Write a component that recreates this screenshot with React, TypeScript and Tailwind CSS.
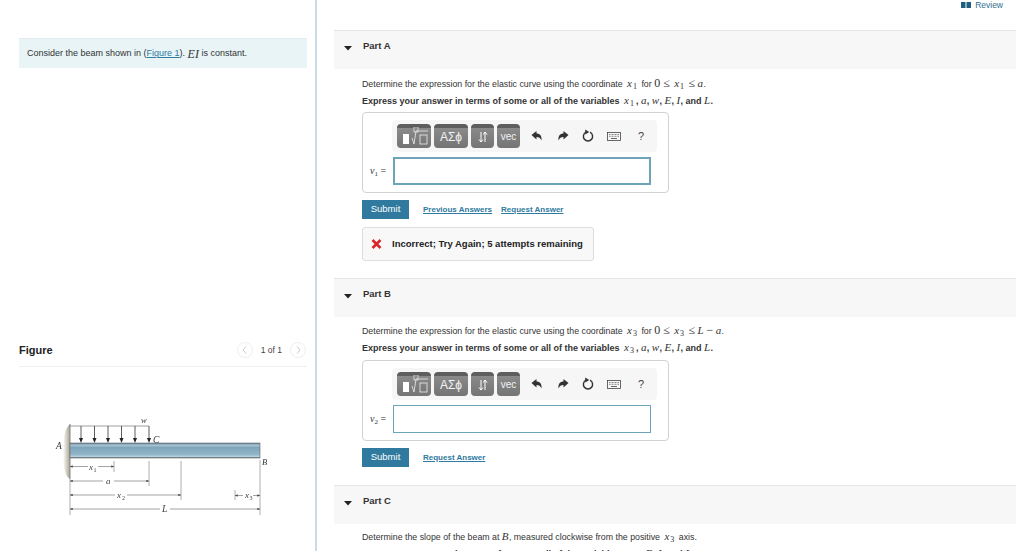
import React from "react";

const sans = { fontFamily: '"Liberation Sans", Arial, sans-serif' };

function M({ children }: { children: React.ReactNode }) {
  return <span className="font-['Liberation_Serif',serif] italic text-[11px] tracking-[0.3px] font-normal">{children}</span>;
}
function Sub({ c, n }: { c: string; n: string }) {
  return (
    <span className="font-['Liberation_Serif',serif] text-[11px] font-normal mx-[2px]">
      <i>{c}</i>
      <sub className="text-[8px] not-italic align-baseline relative top-[2px] ml-[1px]">{n}</sub>
    </span>
  );
}
function N({ children }: { children: React.ReactNode }) {
  return <span className="font-['Liberation_Serif',serif] text-[12px] font-normal">{children}</span>;
}

function PartHeader({ title }: { title: string }) {
  return (
    <div className="flex h-[39px] w-[682px] bg-[#f7f7f7] border-t border-[#e6e6e6] pl-[10px] pt-[8px]">
      <svg width="8" height="14" viewBox="0 0 8 14" className="mt-[1px]">
        <path d="M0 6 H8 L4 10.5 Z" fill="#222" />
      </svg>
      <span className="ml-[11px] text-[9.5px] leading-[14px] font-bold text-[#333]">{title}</span>
    </div>
  );
}

function TBtn({ w, children }: { w: string; children: React.ReactNode }) {
  return (
    <div
      className={`${w} h-[24px] rounded-[4px] border-t-[4px] border-[#5e5e5e] bg-[linear-gradient(#8a8a8a,#747474)] flex items-center justify-center text-white/90 text-[10px] leading-none pb-[3px]`}
    >
      {children}
    </div>
  );
}

function Toolbar() {
  return (
    <div className="ml-[29px] w-[265px] h-[32px] bg-[#f6f6f6] rounded-[4px] flex items-center pl-[5px]">
      <TBtn w="w-[34px]">
        <svg width="30" height="20" viewBox="0 0 30 20">
          <rect x="4" y="7" width="6" height="10" fill="#fff" />
          <path d="M13 11 L15 17 L17 4 H29" stroke="#eee" strokeWidth="0.8" fill="none" />
          <rect x="15" y="0" width="4" height="5" stroke="#eee" strokeWidth="0.7" fill="none" />
          <rect x="21" y="8" width="7" height="9" stroke="#eee" strokeWidth="0.8" fill="none" />
        </svg>
      </TBtn>
      <div className="w-[3px]" />
      <TBtn w="w-[34px]">
        <span className="text-[12px] font-light">ΑΣϕ</span>
      </TBtn>
      <div className="w-[3px]" />
      <TBtn w="w-[23px]">
        <svg width="12" height="12" viewBox="0 0 12 12" fill="none" stroke="#fff" strokeWidth="1">
          <path d="M4 1 V11 M2 8.5 L4 11 L6 8.5" />
          <path d="M8 11 V1 M6.5 3.5 L8 1 L10 3.5" />
        </svg>
      </TBtn>
      <div className="w-[3px]" />
      <TBtn w="w-[23px]">
        <span className="text-[10px]">vec</span>
      </TBtn>
      <svg width="12" height="12" viewBox="0 0 12 12" className="ml-[11px]">
        <path d="M0.5 5 L5.5 1 V3.5 C9 3.5 11 6 10.5 10.5 C9.5 8 8 7 5.5 7 V9.5 Z" fill="#333" />
      </svg>
      <svg width="12" height="12" viewBox="0 0 12 12" className="ml-[14px]">
        <path d="M11.5 5 L6.5 1 V3.5 C3 3.5 1 6 1.5 10.5 C2.5 8 4 7 6.5 7 V9.5 Z" fill="#333" />
      </svg>
      <svg width="12" height="14" viewBox="0 0 12 14" className="ml-[13px]" fill="none">
        <path d="M4 3.2 A4.6 4.6 0 1 0 8 3.2" stroke="#333" strokeWidth="1.4" />
        <path d="M3.2 0.5 L7.2 3 L3.2 5.6 Z" fill="#333" />
      </svg>
      <svg width="14" height="9" viewBox="0 0 14 9" className="ml-[13px] mt-[1px]" fill="none">
        <rect x="0.5" y="0.5" width="13" height="8" stroke="#444" strokeWidth="0.8" />
        <path d="M2 2.5 H12 M2 4.3 H12" stroke="#888" strokeWidth="1" strokeDasharray="1 0.5" />
        <path d="M4 6.5 H10" stroke="#666" strokeWidth="1" />
      </svg>
      <span className="ml-[17px] text-[#444] text-[11px] leading-none">?</span>
    </div>
  );
}

function AnswerBox({ n, focused }: { n: string; focused?: boolean }) {
  return (
    <div className="w-[307px] h-[81px] border border-[#d2d2d2] rounded-[4px] pt-[7px]">
      <Toolbar />
      <div className="flex items-center mt-[5px] h-[28px]">
        <span className="w-[30px] pl-[7px] text-[10px] whitespace-nowrap font-['Liberation_Serif',serif]">
          <i>v</i>
          <sub className="text-[7px] align-baseline relative top-[1.5px]">{n}</sub> =
        </span>
        <div
          className={`w-[258px] h-[28px] bg-white ${focused ? "border-2 border-[#6ea4ba]" : "border border-[#6ea4ba]"}`}
        />
      </div>
    </div>
  );
}

function Submit() {
  return (
    <div className="w-[47px] h-[19px] bg-[#2f7a9e] text-white text-[9.5px] leading-[18px] text-center">Submit</div>
  );
}

function Lnk({ children }: { children: React.ReactNode }) {
  return <span className="text-[8px] font-bold text-[#2f7a9e] underline whitespace-nowrap">{children}</span>;
}

function Beam() {
  const arrows = [81, 94.5, 108, 121.5, 135, 149];
  const serif = "Liberation Serif, serif";
  return (
    <svg width="288" height="179" viewBox="19 372 288 179" className="blur-[0.35px]">
      <defs>
        <linearGradient id="beam" x1="0" y1="0" x2="0" y2="1">
          <stop offset="0" stopColor="#5f7f92" />
          <stop offset="0.15" stopColor="#a9c5d3" />
          <stop offset="0.3" stopColor="#7fa6bb" />
          <stop offset="0.75" stopColor="#8fb4c6" />
          <stop offset="0.9" stopColor="#b5cfdb" />
          <stop offset="1" stopColor="#5a6a74" />
        </linearGradient>
        <linearGradient id="wall" x1="0" y1="0" x2="1" y2="0">
          <stop offset="0" stopColor="#ffffff" />
          <stop offset="1" stopColor="#a8a490" />
        </linearGradient>
        <marker id="ar" markerWidth="5" markerHeight="4" refX="4.5" refY="2" orient="auto-start-reverse">
          <path d="M0 0 L5 2 L0 4 Z" fill="#444" />
        </marker>
      </defs>
      <path d="M70 423 V478 C65 476 63 465 63 450 C63 436 65 427 70 423 Z" fill="url(#wall)" />
      <line x1="70" y1="423" x2="70" y2="478" stroke="#888" strokeWidth="1" />
      <rect x="70" y="442" width="190" height="15" fill="url(#beam)" stroke="#666" strokeWidth="0.6" />
      <line x1="70" y1="425" x2="149" y2="425" stroke="#777" strokeWidth="0.7" />
      {arrows.map((x) => (
        <g key={x}>
          <line x1={x} y1="425" x2={x} y2="438" stroke="#333" strokeWidth="0.8" />
          <path d={`M${x - 2} 437 L${x + 2} 437 L${x} 442 Z`} fill="#222" />
        </g>
      ))}
      <g stroke="#999" strokeWidth="0.8">
        <line x1="114" y1="460" x2="114" y2="471" />
        <line x1="149" y1="460" x2="149" y2="485" />
        <line x1="181" y1="460" x2="181" y2="499" />
        <line x1="235" y1="489" x2="235" y2="499" />
        <line x1="70" y1="478" x2="70" y2="514" />
        <line x1="260" y1="459" x2="260" y2="514" />
      </g>
      <g stroke="#666" strokeWidth="0.6" fill="none">
        <line x1="70" y1="465.5" x2="88" y2="465.5" markerStart="url(#ar)" />
        <line x1="98" y1="465.5" x2="114" y2="465.5" markerEnd="url(#ar)" />
        <line x1="70" y1="480" x2="103" y2="480" markerStart="url(#ar)" />
        <line x1="114" y1="480" x2="149" y2="480" markerEnd="url(#ar)" />
        <line x1="70" y1="494" x2="115" y2="494" markerStart="url(#ar)" />
        <line x1="127" y1="494" x2="181" y2="494" markerEnd="url(#ar)" />
        <line x1="235" y1="494.5" x2="243" y2="494.5" markerStart="url(#ar)" />
        <line x1="253" y1="494.5" x2="260" y2="494.5" markerEnd="url(#ar)" />
        <line x1="70" y1="508" x2="160" y2="508" markerStart="url(#ar)" />
        <line x1="170" y1="508" x2="260" y2="508" markerEnd="url(#ar)" />
      </g>
      <g fontFamily={serif} fontStyle="italic" fill="#444" fontSize="9">
        <text x="141" y="422" fontSize="8.5">w</text>
        <text x="153" y="442" fontSize="9.5" fill="#333">C</text>
        <text x="56" y="448" fontSize="9.5" fill="#333">A</text>
        <text x="262" y="464" fontSize="8.5" fill="#333">B</text>
        <text x="89" y="469">x</text>
        <text x="93.5" y="470.5" fontSize="6" fontStyle="normal">1</text>
        <text x="106" y="483">a</text>
        <text x="117" y="497">x</text>
        <text x="122" y="499" fontSize="6" fontStyle="normal">2</text>
        <text x="245" y="497">x</text>
        <text x="249.5" y="499" fontSize="6" fontStyle="normal">3</text>
        <text x="162" y="511" fontSize="10">L</text>
      </g>
    </svg>
  );
}

function Pager({ d }: { d: string }) {
  return (
    <span className="w-[16px] h-[16px] rounded-full border border-[#efefef] flex items-center justify-center">
      <svg width="5" height="8" viewBox="0 0 5 8" fill="none" stroke="#bbb" strokeWidth="0.8">
        <path d={d} />
      </svg>
    </span>
  );
}

export default function App() {
  return (
    <div style={sans} className="flex w-[1024px] h-[551px] overflow-hidden bg-white text-[#333]">
      <aside className="w-[317px] h-full shrink-0 border-r-2 border-[#c8dbe8] pl-[19px] pr-[8px]">
        <div className="mt-[38px] h-[30px] bg-[#e9f4f7] border-t border-[#e3ecef] pl-[8px] pt-[1px] flex items-center text-[9px] whitespace-nowrap">
          Consider the beam shown in (<span className="text-[#2f7a9e] underline">Figure 1</span>).&nbsp;
          <span className="font-['Liberation_Serif',serif] italic text-[12px]">EI</span>
          &nbsp;is constant.
        </div>
        <div className="mt-[272px] h-[27px] flex items-center justify-between border-b border-[#efefef] pb-[6px]">
          <span className="text-[11px] font-bold text-[#222]">Figure</span>
          <div className="flex items-center text-[8.5px] text-[#444] mr-[1px]">
            <Pager d="M4 0.5 L1 4 L4 7.5" />
            <span className="mx-[8px]">1 of 1</span>
            <Pager d="M1 0.5 L4 4 L1 7.5" />
          </div>
        </div>
        <div className="mt-[6px]">
          <Beam />
        </div>
      </aside>

      <main className="flex-1 min-w-0 pl-[17px]">
        <div className="h-[30px] w-[682px] flex justify-end pr-[13px] pt-[0.5px]">
          <span className="flex items-start gap-[4px] text-[8.5px] leading-[9px] text-[#2f6f8f]">
            <svg width="10" height="6" viewBox="0 0 10 6" className="mt-[1px]">
              <path d="M0 0 H4.5 V6 H0 Z M5.5 0 H10 V6 H5.5 Z" fill="#1f5f7f" />
            </svg>
            Review
          </span>
        </div>

        <PartHeader title="Part A" />
        <div className="pl-[28px] text-[8.8px] leading-[12px]">
          <p className="mt-[8px] h-[12px] whitespace-nowrap">
            Determine the expression for the elastic curve using the coordinate <Sub c="x" n="1" /> for{" "}
            <N>0 ≤</N> <Sub c="x" n="1" /> <N>≤</N> <M>a</M>.
          </p>
          <p className="mt-[5px] h-[12px] text-[9px] font-bold whitespace-nowrap">
            Express your answer in terms of some or all of the variables <Sub c="x" n="1" />, <M>a</M>, <M>w</M>, <M>E</M>,{" "}
            <M>I</M>, and <M>L</M>.
          </p>
          <div className="mt-[6px]">
            <AnswerBox n="1" focused />
          </div>
          <div className="mt-[7px] flex items-center">
            <Submit />
            <div className="ml-[14px] flex gap-[9px]">
              <Lnk>Previous Answers</Lnk>
              <Lnk>Request Answer</Lnk>
            </div>
          </div>
          <div className="mt-[8px] w-[232px] h-[34px] bg-[#f8f8f8] border border-[#ddd] rounded-[3px] flex items-center pl-[8px] text-[9.5px] font-bold text-[#222] whitespace-nowrap">
            <svg width="11" height="10" viewBox="0 0 11 10" fill="none" stroke="#d9252a" strokeWidth="2.6">
              <path d="M1.5 1 L9.5 9 M9.5 1 L1.5 9" />
            </svg>
            <span className="ml-[10px]">Incorrect; Try Again; 5 attempts remaining</span>
          </div>
        </div>

        <div className="mt-[17px]">
          <PartHeader title="Part B" />
        </div>
        <div className="pl-[28px] text-[8.8px] leading-[12px]">
          <p className="mt-[7px] h-[12px] whitespace-nowrap">
            Determine the expression for the elastic curve using the coordinate <Sub c="x" n="3" /> for{" "}
            <N>0 ≤</N> <Sub c="x" n="3" /> <N>≤</N> <M>L</M> <N>−</N> <M>a</M>.
          </p>
          <p className="mt-[5px] h-[12px] text-[9px] font-bold whitespace-nowrap">
            Express your answer in terms of some or all of the variables <Sub c="x" n="3" />, <M>a</M>, <M>w</M>, <M>E</M>,{" "}
            <M>I</M>, and <M>L</M>.
          </p>
          <div className="mt-[7px]">
            <AnswerBox n="2" />
          </div>
          <div className="mt-[7px] flex items-center">
            <Submit />
            <div className="ml-[14px] flex">
              <Lnk>Request Answer</Lnk>
            </div>
          </div>
        </div>

        <div className="mt-[18px]">
          <PartHeader title="Part C" />
        </div>
        <div className="pl-[28px] text-[8.8px] leading-[12px]">
          <p className="mt-[6px] h-[12px] whitespace-nowrap">
            Determine the slope of the beam at <M>B</M>, measured clockwise from the positive <Sub c="x" n="3" /> axis.
          </p>
          <p className="mt-[5px] h-[12px] text-[9px] font-bold whitespace-nowrap">
            Express your answer in terms of some or all of the variables <M>a</M>, <M>w</M>, <M>E</M>, <M>I</M>, and <M>L</M>.
          </p>
        </div>
      </main>
    </div>
  );
}
